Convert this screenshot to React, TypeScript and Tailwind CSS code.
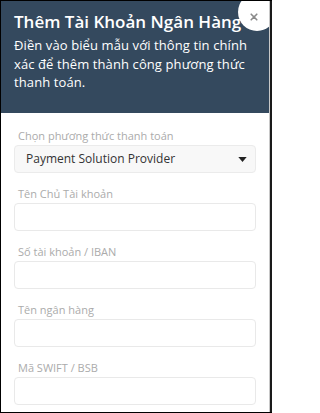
export default function App() {
  const fields = ["Tên Chủ Tài khoản", "Số tài khoản / IBAN", "Tên ngân hàng", "Mã SWIFT / BSB"];

  return (
    <div
      className="w-[272px] h-[413px] flex border-y border-l border-black bg-white overflow-hidden"
      style={{ fontFamily: '"Open Sans", "Noto Sans", sans-serif' }}
    >
      <div className="relative flex-1 flex flex-col overflow-hidden">
        <div className="h-[112px] shrink-0 bg-[#34495e] pl-[13px] pr-[4px] pt-[9px]">
          <h2 className="text-[17px] font-semibold text-white leading-[24px]">
            Thêm Tài Khoản Ngân Hàng
          </h2>
          <p className="mt-[2px] text-[13px] text-white leading-[18.5px] tracking-[0.1px]">
            Điền vào biểu mẫu với thông tin chính xác để thêm thành công phương thức thanh toán.
          </p>
        </div>

        <button className="absolute -top-[8px] -right-[7px] w-[38px] h-[38px] rounded-full bg-white flex items-center justify-center pt-[9px] pr-[6px]">
          <svg viewBox="0 0 10 10" className="w-[8px] h-[8px]">
            <path d="M1.5 1.5 L8.5 8.5 M8.5 1.5 L1.5 8.5" stroke="#8a8a8a" strokeWidth="2" strokeLinecap="round" />
          </svg>
        </button>

        <div className="flex flex-col px-[13px] pt-[15px]">
          <label className="text-[11px] text-[#ababab] leading-[16px] pl-[4px]">Chọn phương thức thanh toán</label>
          <div className="mt-[1px] h-[28px] rounded-[4px] bg-[#f8f8f8] border border-[#ebebeb] flex items-center justify-between pl-[11px] pr-[8px]">
            <span className="text-[12px] font-medium text-[#333]">Payment Solution Provider</span>
            <svg viewBox="0 0 10 6" className="w-[9px] h-[5px]">
              <path d="M0 0 L10 0 L5 6 Z" fill="#222" />
            </svg>
          </div>

          {fields.map((f) => (
            <div key={f} className="flex flex-col mt-[13px]">
              <label className="text-[11px] text-[#ababab] leading-[16px] pl-[4px]">{f}</label>
              <div className="mt-[1px] h-[28px] rounded-[4px] bg-white border border-[#e9e9e9]" />
            </div>
          ))}
        </div>
      </div>
      <div className="w-[1px] bg-[#c8c8c8]" />
      <div className="w-[2px] bg-[#1a1a1a]" />
    </div>
  );
}
